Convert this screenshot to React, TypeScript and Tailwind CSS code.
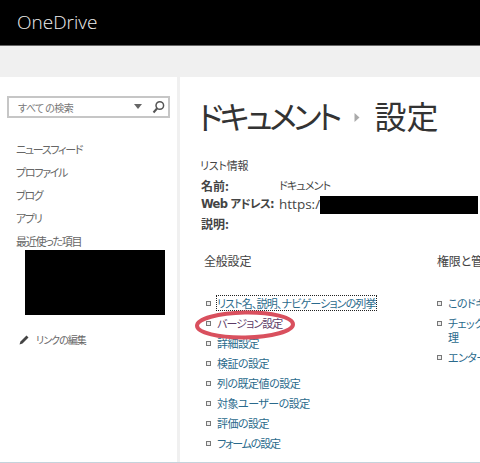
import React from "react";

const font = { fontFamily: '"Noto Sans CJK JP", sans-serif' };

function SideItem({ children }: { children: React.ReactNode }) {
  return <li className="h-[23px] leading-[23px] text-[11px] text-[#666] tracking-[-1.3px]">{children}</li>;
}

function LinkItem({ children, cls = "tracking-[-0.5px]", outlined = false }: { children: React.ReactNode; cls?: string; outlined?: boolean }) {
  return (
    <li className="flex items-start gap-[6px] text-[11px] leading-[14px] text-[#2a6a8c]">
      <span className="mt-[5px] shrink-0 w-[5px] h-[5px] border border-[#777] bg-[#eee]" />
      <span className={`${outlined ? "outline-1 outline-dotted outline-[#222]" : ""} ${cls}`}>{children}</span>
    </li>
  );
}

export default function App() {
  return (
    <div className="relative w-[480px] h-[463px] overflow-hidden bg-white flex flex-col [font-feature-settings:'palt']" style={font}>
      <header className="h-[46px] shrink-0 bg-black border-b border-[#666] flex items-center pl-[17px]">
        <span className="text-[19px] text-[#eee] font-['Open_Sans',sans-serif] font-light">OneDrive</span>
      </header>
      <div className="h-[31px] shrink-0 bg-[#f0f0f0]" />
      <div className="flex-1 flex min-h-0 border-b border-[#c5d3dc]">
        <aside className="w-[177px] shrink-0 pl-[7px] pt-[19px]">
          <div className="w-[163px] h-[22px] border-2 border-[#c6c6c6] flex items-center pl-[9px] pr-[3px]">
            <span className="text-[10px] text-[#777] tracking-[-0.6px] flex-1">すべて の検索</span>
            <svg width="9" height="6" viewBox="0 0 9 6" className="mr-[9px]"><path d="M0 0h8L4 5z" fill="#666" /></svg>
            <svg width="13" height="14" viewBox="0 0 13 14" fill="none" stroke="#555">
              <circle cx="7.8" cy="5.5" r="3.8" strokeWidth="1.5" />
              <path d="M5 8.5L1.5 12.5" strokeWidth="2" />
            </svg>
          </div>
          <ul className="mt-[20px] pl-[9px]">
            <SideItem>ニュースフィード</SideItem>
            <SideItem>プロファイル</SideItem>
            <SideItem>ブログ</SideItem>
            <SideItem>アプリ</SideItem>
            <SideItem>最近使った項目</SideItem>
          </ul>
          <div className="ml-[18px] -mt-[3px] w-[140px] h-[65px] bg-black" />
          <div className="mt-[17px] ml-[12px] flex items-center gap-[6px] text-[10px] text-[#666] tracking-[-1px]">
            <svg width="11" height="11" viewBox="0 0 11 11"><path d="M0.5 10.5L1.5 7.5L7.5 1.5L9.5 3.5L3.5 9.5z" fill="#444" /></svg>
            リンクの編集
          </div>
        </aside>
        <main className="flex-1 min-w-0 bg-white border-l-[3px] border-[#f0f0f0] pl-[18px] pt-[15px] overflow-hidden">
          <h1 className="flex items-center h-[46px] whitespace-nowrap text-[#333] text-[32px] leading-none">
            <span className="tracking-[-3.8px]">ドキュメント</span>
            <svg width="6" height="9" viewBox="0 0 6 9" className="ml-[15px] mr-[15px] mt-[5px]"><path d="M0.5 0v9L5.5 4.5z" fill="#aaa" /></svg>
            <span>設定</span>
          </h1>
          <p className="mt-[19px] pl-[2px] text-[11px] leading-[16px] text-[#444] tracking-[-0.2px]">リスト情報</p>
          <dl className="mt-[3px] pl-[3px] text-[12px] text-[#444] leading-[19px]">
            <div className="flex h-[19px]"><dt className="w-[78px] font-bold">名前:</dt><dd className="text-[11px] tracking-[-0.8px]">ドキュメント</dd></div>
            <div className="flex h-[19px] items-center whitespace-nowrap">
              <dt className="w-[78px] font-bold font-['DejaVu_Sans','Noto_Sans_CJK_JP',sans-serif] text-[11.5px] tracking-[-0.7px]">Web アドレス:</dt>
              <dd className="flex items-center font-['Open_Sans',sans-serif] text-[13.5px]">https:/<span className="inline-block w-[158px] h-[18px] bg-black" /></dd>
            </div>
            <div className="flex h-[19px]"><dt className="w-[78px] font-bold">説明:</dt></div>
          </dl>
          <div className="mt-[20px] flex whitespace-nowrap">
            <section className="w-[238px] shrink-0 pl-[6px]">
              <h2 className="text-[12px] leading-[16px] text-[#444] tracking-[-0.2px]">全般設定</h2>
              <ul className="mt-[27px] ml-[2px] flex flex-col gap-[6px]">
                <LinkItem outlined cls="tracking-[-0.85px]">リスト名、説明、ナビゲーションの列挙</LinkItem>
                <LinkItem cls="tracking-[-0.9px] text-[#5c3a66]">バージョン設定</LinkItem>
                <LinkItem>詳細設定</LinkItem>
                <LinkItem>検証の設定</LinkItem>
                <LinkItem>列の既定値の設定</LinkItem>
                <LinkItem>対象ユーザーの設定</LinkItem>
                <LinkItem>評価の設定</LinkItem>
                <LinkItem cls="tracking-[-1.2px]">フォームの設定</LinkItem>
              </ul>
            </section>
            <section className="shrink-0 w-[100px]">
              <h2 className="pl-[1px] text-[12px] leading-[16px] text-[#444] tracking-[-0.2px]">権限と管理</h2>
              <ul className="mt-[27px] ml-[1px] flex flex-col gap-[6px]">
                <LinkItem>このドキュメント</LinkItem>
                <LinkItem><span className="block">チェックイン</span><span className="block">理</span></LinkItem>
                <LinkItem>エンタープライズ</LinkItem>
              </ul>
            </section>
          </div>
        </main>
      </div>
      <svg className="absolute left-[194px] top-[308px]" width="104" height="34" viewBox="0 0 104 34" fill="none">
        <ellipse cx="51" cy="17" rx="48" ry="12.5" stroke="#d9505e" strokeWidth="4" transform="rotate(-1 51 17)" />
      </svg>
    </div>
  );
}
